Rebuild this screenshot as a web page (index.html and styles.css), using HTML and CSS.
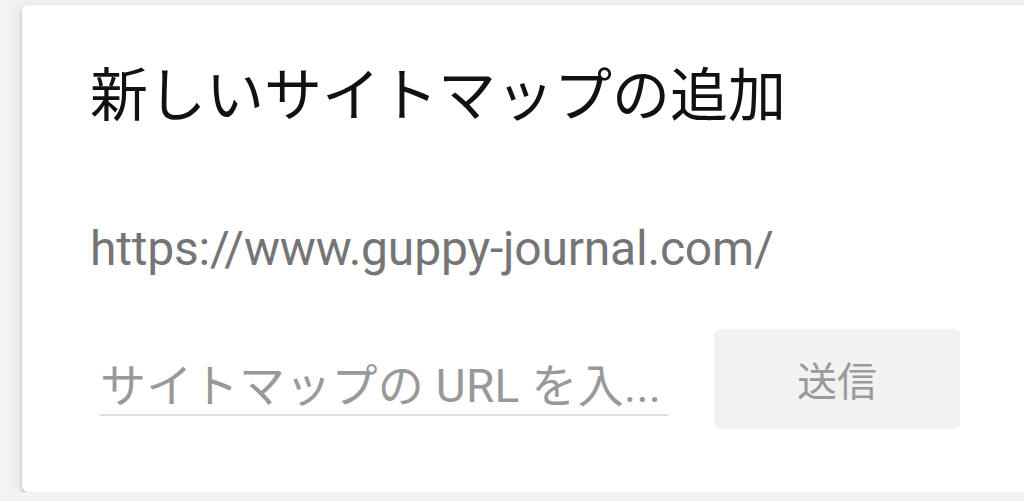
FILE: index.html
```html
<!DOCTYPE html>
<html lang="ja">
<head>
  <meta charset="UTF-8">
  <title>新しいサイトマップの追加</title>
  <link rel="stylesheet" href="styles.css">
</head>
<body>
  <div class="card">
    <h2>新しいサイトマップの追加</h2>
    <div class="site">https://www.guppy-journal.com/</div>
    <div class="row">
      <div class="field">サイトマップの URL を入...</div>
      <button class="send">送信</button>
    </div>
  </div>
</body>
</html>
```

FILE: styles.css
```css
body {
  margin: 0;
  background: #f3f3f3;
  font-family: Roboto, "Noto Sans CJK JP", sans-serif;
  overflow: hidden;
}
.card {
  margin: 5px 0 0 22px;
  width: 1040px;
  height: 487px;
  background: #fff;
  border-radius: 6px 0 0 6px;
  box-shadow: 0 3px 3px rgba(0,0,0,0.22), -4px 0 12px rgba(0,0,0,0.08);
  padding: 46px 0 0 68px;
  box-sizing: border-box;
}
h2 {
  margin: 0;
  font-family: "Noto Sans CJK JP", sans-serif;
  font-weight: 400;
  font-size: 58px;
  line-height: 80px;
  color: #111;
}
.site {
  margin-top: 90px;
  font-size: 48px;
  line-height: 56px;
  letter-spacing: -0.2px;
  color: #757575;
}
.row {
  display: flex;
  align-items: flex-start;
  margin-top: 52px;
}
.field {
  margin: 29px 0 0 10px;
  width: 568px;
  font-size: 46px;
  line-height: 56px;
  letter-spacing: 0.3px;
  color: #999;
  border-bottom: 2px solid #dedede;
  white-space: nowrap;
}
.send {
  margin-left: 46px;
  width: 246px;
  height: 100px;
  border: none;
  border-radius: 6px;
  background: #f2f2f2;
  color: #9a9a9a;
  font-family: "Noto Sans CJK JP", sans-serif;
  font-size: 40px;
}
```
